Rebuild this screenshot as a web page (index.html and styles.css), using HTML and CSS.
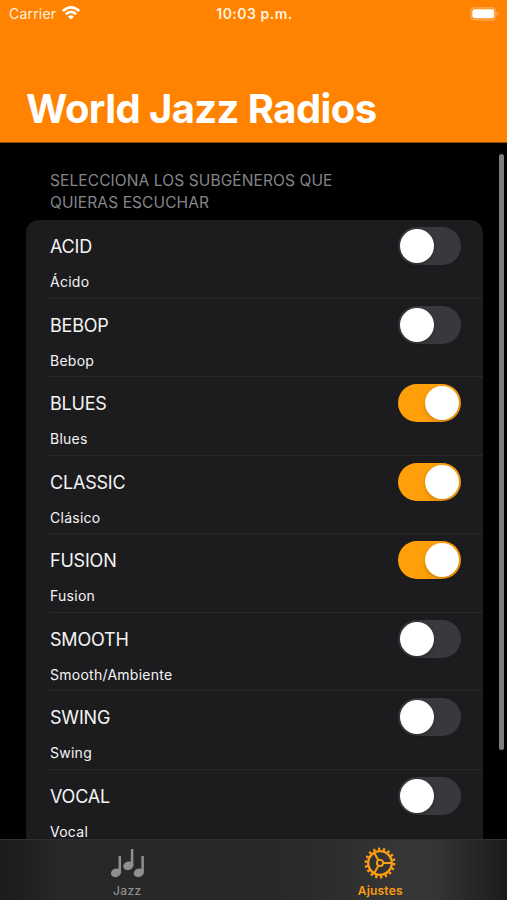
FILE: index.html
```html
<!DOCTYPE html>
<html lang="es">
<head>
<meta charset="utf-8">
<title>World Jazz Radios</title>
<link rel="stylesheet" href="styles.css">
</head>
<body>
<div class="screen">
  <header class="header">
    <div class="status">
      <div class="carrier"><span>Carrier</span>
        <svg class="wifi" viewBox="0 0 18 14" width="18" height="14"><g fill="none" stroke="#fff" stroke-width="2.6"><path d="M.8 5.1Q9-2.2 17.2 5.1"/><path d="M3.8 8.3Q9 3.6 14.2 8.3"/></g><path fill="#fff" d="M6 10.4Q9 7.9 12 10.4L9 13.6Z"/></svg>
      </div>
      <div class="time">10:03 p.m.</div>
      <svg class="battery" viewBox="0 0 30 14" width="30" height="14"><rect x=".8" y=".8" width="25" height="12" rx="3.6" fill="none" stroke="#fff" stroke-opacity=".36" stroke-width="1.2"/><rect x="2.3" y="2.3" width="22" height="9" rx="2.3" fill="#fff"/><path d="M27.4 4.8Q30.4 6.8 27.4 8.8Z" fill="#fff" fill-opacity=".4"/></svg>
    </div>
    <h1 class="title">World Jazz Radios</h1>
  </header>
  <main class="content">
    <h2 class="caption">SELECCIONA LOS SUBGÉNEROS QUE<br>QUIERAS ESCUCHAR</h2>
    <div class="list">
      <div class="row"><div class="text"><div class="name">ACID</div><div class="sub">Ácido</div></div><div class="toggle"></div></div>
      <div class="row"><div class="text"><div class="name">BEBOP</div><div class="sub">Bebop</div></div><div class="toggle"></div></div>
      <div class="row"><div class="text"><div class="name">BLUES</div><div class="sub">Blues</div></div><div class="toggle on"></div></div>
      <div class="row"><div class="text"><div class="name">CLASSIC</div><div class="sub">Clásico</div></div><div class="toggle on"></div></div>
      <div class="row"><div class="text"><div class="name">FUSION</div><div class="sub">Fusion</div></div><div class="toggle on"></div></div>
      <div class="row"><div class="text"><div class="name">SMOOTH</div><div class="sub">Smooth/Ambiente</div></div><div class="toggle"></div></div>
      <div class="row"><div class="text"><div class="name">SWING</div><div class="sub">Swing</div></div><div class="toggle"></div></div>
      <div class="row"><div class="text"><div class="name">VOCAL</div><div class="sub">Vocal</div></div><div class="toggle"></div></div>
    </div>
    <div class="scrollbar"></div>
  </main>
  <nav class="tabs">
    <div class="tab">
      <svg viewBox="0 -1.5 36 32" width="36" height="32"><g fill="#8f8f8f"><ellipse cx="7" cy="24.3" rx="5.2" ry="4.2" transform="rotate(-20 7 24.3)"/><ellipse cx="19.3" cy="17.3" rx="5.2" ry="4.2" transform="rotate(-20 19.3 17.3)"/><ellipse cx="29.8" cy="24.3" rx="5.2" ry="4.2" transform="rotate(-20 29.8 24.3)"/></g><path d="M10.8 24V7.5M23.1 17V.5M33.6 24V7.5" fill="none" stroke="#8f8f8f" stroke-width="2.5"/></svg>
      <span>Jazz</span>
    </div>
    <div class="tab active">
      <svg viewBox="-16 -16 32 32" width="32" height="32" fill="none" stroke="#fd9e12"><circle r="14" stroke-width="2.8" stroke-dasharray="2.3 2.587"/><circle r="11.8" stroke-width="2.3"/><circle r="3.1" stroke-width="1.9"/><path d="M3.1 0H12M-1.6-2.7L-6-10.4M-1.6 2.7L-6 10.4" stroke-width="2"/></svg>
      <span>Ajustes</span>
    </div>
  </nav>
</div>
</body>
</html>
```
FILE: styles.css
```css
* { box-sizing: border-box; }
body { margin: 0; background: #000; font-family: Inter, "Liberation Sans", sans-serif; color: #fff; }
.screen { width: 507px; height: 900px; display: flex; flex-direction: column; overflow: hidden; }
.header { height: 143px; flex: none; background: linear-gradient(#ff8200 142px, #8c4700 142px); }
.status { height: 27px; padding: 0 7px 0 9px; display: grid; grid-template-columns: 1fr auto 1fr; align-items: center; color: #fff3df; }
.carrier { display: flex; align-items: center; gap: 6px; font-size: 14px; letter-spacing: .2px; }
.wifi { margin-top: -1px; }
.time { font-size: 14px; font-weight: 600; letter-spacing: .5px; }
.battery { justify-self: end; margin-top: 0; }
.title { margin: 57px 0 0 26px; font-size: 40px; line-height: 50px; font-weight: 700; letter-spacing: -.6px; white-space: nowrap; }
.content { flex: 1; min-height: 0; position: relative; overflow: hidden; padding: 27px 24.5px 0 25.5px; }
.caption { margin: 0 0 7px 24.5px; font-size: 15.5px; line-height: 21.7px; font-weight: 400; letter-spacing: .1px; color: #858589; white-space: nowrap; }
.list { background: #1c1c1e; border-radius: 13px; height: 640px; }
.row { height: 78.46px; display: flex; justify-content: space-between; align-items: flex-start; margin-left: 24.5px; padding: 7px 21.5px 0 0; border-bottom: 1px solid #28282a; }
.row:last-child { border: 0; }
.text { padding-top: 8px; color: #f4f4f5; }
.name { font-size: 18px; line-height: 24px; letter-spacing: -.2px; }
.sub { margin-top: 13px; font-size: 14px; line-height: 20px; letter-spacing: .26px; }
.toggle { width: 63px; height: 38px; border-radius: 19px; background: #39393d; padding: 2px; display: flex; }
.toggle::before { content: ""; width: 34px; height: 34px; border-radius: 50%; background: #fff; box-shadow: 0 2px 4px #0003; }
.toggle.on { background: #ff9f0a; justify-content: flex-end; }
.scrollbar { position: absolute; top: 11px; left: 499px; width: 5px; height: 596px; border-radius: 3px; background: #7d7d7d; }
.tabs { height: 61px; flex: none; display: flex; border-top: 1px solid #303031; background: linear-gradient(90deg, #1c1c1c 0, #1f1f1f 25px, #282828 60px, #282828 270px, #2d2d2d 335px, #363636 400px, #353535 435px, #282828 470px, #1c1c1c 507px); }
.tab { flex: 1; display: flex; flex-direction: column; align-items: center; padding-top: 7px; color: #8f8f8f; font-size: 12px; font-weight: 500; letter-spacing: .4px; }
.tab svg { display: block; }
.tab span { line-height: 16px; margin: 4px 0 0 1px; }
.active { color: #fd9e12; }
.active span { margin-left: 0; font-weight: 600; letter-spacing: .2px; }
```
